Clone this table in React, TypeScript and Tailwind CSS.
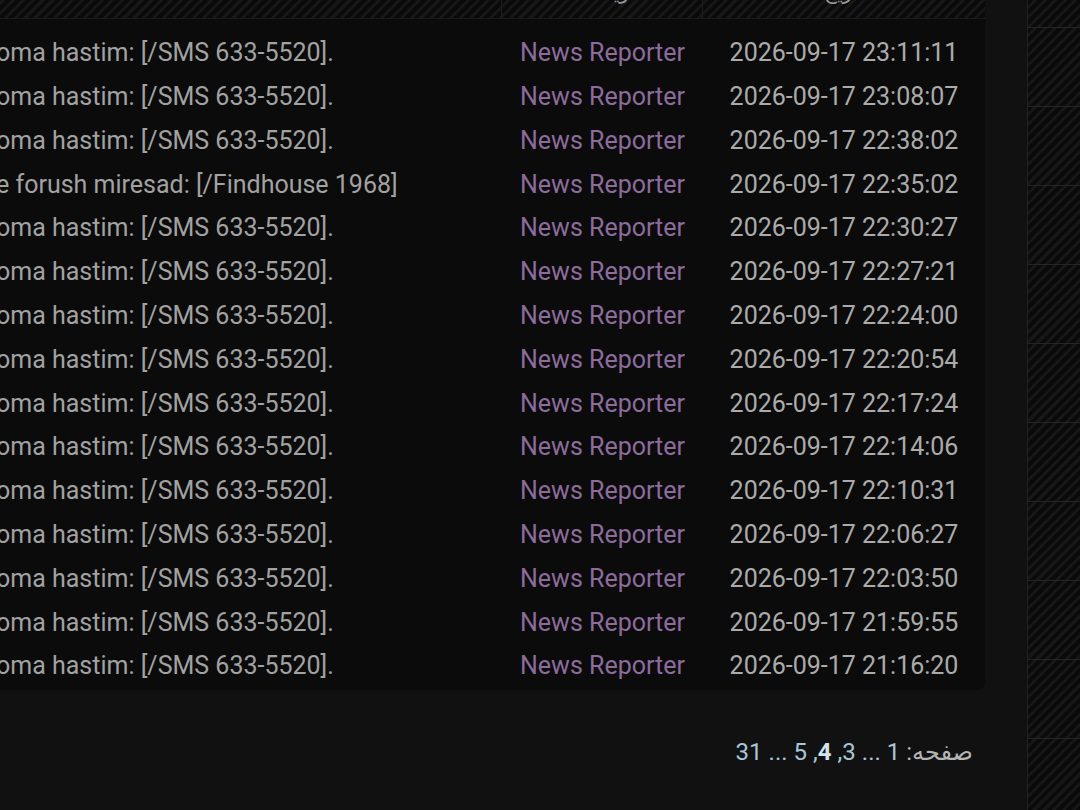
import React from "react";

const rows: { title: string; time: string }[] = [
  { title: "oma hastim: [/SMS 633-5520].", time: "2026-09-17 23:11:11" },
  { title: "oma hastim: [/SMS 633-5520].", time: "2026-09-17 23:08:07" },
  { title: "oma hastim: [/SMS 633-5520].", time: "2026-09-17 22:38:02" },
  { title: "e forush miresad: [/Findhouse 1968]", time: "2026-09-17 22:35:02" },
  { title: "oma hastim: [/SMS 633-5520].", time: "2026-09-17 22:30:27" },
  { title: "oma hastim: [/SMS 633-5520].", time: "2026-09-17 22:27:21" },
  { title: "oma hastim: [/SMS 633-5520].", time: "2026-09-17 22:24:00" },
  { title: "oma hastim: [/SMS 633-5520].", time: "2026-09-17 22:20:54" },
  { title: "oma hastim: [/SMS 633-5520].", time: "2026-09-17 22:17:24" },
  { title: "oma hastim: [/SMS 633-5520].", time: "2026-09-17 22:14:06" },
  { title: "oma hastim: [/SMS 633-5520].", time: "2026-09-17 22:10:31" },
  { title: "oma hastim: [/SMS 633-5520].", time: "2026-09-17 22:06:27" },
  { title: "oma hastim: [/SMS 633-5520].", time: "2026-09-17 22:03:50" },
  { title: "oma hastim: [/SMS 633-5520].", time: "2026-09-17 21:59:55" },
  { title: "oma hastim: [/SMS 633-5520].", time: "2026-09-17 21:16:20" },
];

const stripes =
  "bg-[repeating-linear-gradient(135deg,#0a0a0a_0px,#0a0a0a_4px,#171717_4px,#171717_7px)]";

export default function App() {
  return (
    <div
      className="flex h-[810px] w-[1080px] overflow-hidden bg-[#111111] text-[25px]"
      style={{ fontFamily: 'Roboto, "DejaVu Sans", sans-serif' }}
    >
      {/* main column */}
      <div className="flex w-[1027px] shrink-0 flex-col">
        {/* table panel */}
        <div className="w-[985px] overflow-hidden rounded-br-lg bg-[#0b0b0b]">
          {/* header, mostly scrolled off the top */}
          <div className={`-mt-[34px] flex h-[53px] border-b border-[#1a1a1a] ${stripes}`}>
            <div className="w-[502px] border-r border-[#1c1c1c]" />
            <div className="flex w-[201px] items-center justify-center border-r border-[#1c1c1c] text-[20px] text-[#9a9a9a]" dir="rtl">
              نویسنده
            </div>
            <div className="flex flex-1 items-center justify-center text-[20px] text-[#9a9a9a]" dir="rtl">
              تاریخ
            </div>
          </div>
          {/* body */}
          <div className="pt-[12px] pb-[2px]">
            {rows.map((r, i) => (
              <div key={i} className="flex h-[43.8px] items-center whitespace-nowrap">
                <div className="-ml-[4px] w-[506px] text-[#a2a2a2]">{r.title}</div>
                <div className="w-[201px] text-center text-[#8c6c9c]">News Reporter</div>
                <div className="flex-1 text-center text-[#ababab]">{r.time}</div>
              </div>
            ))}
          </div>
        </div>

        {/* pagination */}
        <div className="flex w-[973px] justify-end pt-[44px] text-[24px]">
          <div className="flex items-center gap-[6px] text-[#a8c6d8]">
            <span>31</span>
            <span>...</span>
            <span>5</span>
            <span>,<span className="font-bold text-[#cfe4f0]">4</span></span>
            <span>,3</span>
            <span>...</span>
            <span>1</span>
            <span dir="rtl" className="text-[#b4b4b4]">صفحه:</span>
          </div>
        </div>
      </div>

      {/* right striped rail */}
      <div className="flex flex-1 flex-col border-l border-[#202222]">
        <div className={`h-[28px] shrink-0 border-b border-[#242626] ${stripes}`} />
        {Array.from({ length: 10 }).map((_, i) => (
          <div key={i} className={`h-[79px] shrink-0 border-b border-[#242626] ${stripes}`} />
        ))}
      </div>
    </div>
  );
}
